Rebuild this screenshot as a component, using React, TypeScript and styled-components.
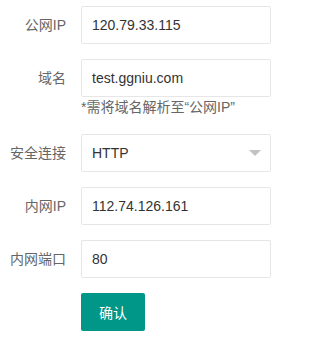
import React from "react";
import styled, { createGlobalStyle } from "styled-components";

const Global = createGlobalStyle`
  html, body { margin: 0; padding: 0; background: #fff; }
  body {
    font-family: "Liberation Sans", Arial, "Noto Sans CJK SC", sans-serif;
    font-size: 14px;
    color: #333;
  }
`;

const Form = styled.form`
  width: 290px;
  padding-top: 6px;
  box-sizing: border-box;
`;

const Item = styled.div`
  display: flex;
  align-items: flex-start;
  margin-bottom: 15px;
`;

const Label = styled.label`
  width: 81px;
  box-sizing: border-box;
  padding: 9px 15px 9px 0;
  line-height: 20px;
  text-align: right;
  color: #666;
  font-size: 14px;
  flex-shrink: 0;
`;

const Block = styled.div`
  width: 190px;
  display: flex;
  flex-direction: column;
`;

const Field = styled.div`
  position: relative;
  height: 38px;
  box-sizing: border-box;
  border: 1px solid #e6e6e6;
  border-radius: 2px;
  background: #fff;
  padding-left: 10px;
  display: flex;
  align-items: center;
  color: #333;
  font-size: 14px;
`;

const Arrow = styled.span`
  position: absolute;
  right: 9px;
  top: 50%;
  margin-top: -3px;
  width: 0;
  height: 0;
  border-left: 6px solid transparent;
  border-right: 6px solid transparent;
  border-top: 6px solid #c2c2c2;
`;

const Hint = styled.div`
  height: 22px;
  line-height: 20px;
  color: #666;
  font-size: 14px;
  white-space: nowrap;
`;

const Button = styled.button`
  height: 38px;
  padding: 0 18px;
  border: none;
  border-radius: 2px;
  background: #009688;
  color: #fff;
  font-family: inherit;
  font-size: 14px;
  cursor: pointer;
`;

type Row = { label: string; value: string; select?: boolean; hint?: string };

const rows: Row[] = [
  { label: "公网IP", value: "120.79.33.115" },
  { label: "域名", value: "test.ggniu.com", hint: "*需将域名解析至“公网IP”" },
  { label: "安全连接", value: "HTTP", select: true },
  { label: "内网IP", value: "112.74.126.161" },
  { label: "内网端口", value: "80" },
];

export default function App() {
  return (
    <>
      <Global />
      <Form onSubmit={(e) => e.preventDefault()}>
        {rows.map((r) => (
          <Item key={r.label}>
            <Label>{r.label}</Label>
            <Block>
              <Field>
                {r.value}
                {r.select && <Arrow />}
              </Field>
              {r.hint && <Hint>{r.hint}</Hint>}
            </Block>
          </Item>
        ))}
        <Item>
          <Label />
          <Block>
            <div>
              <Button type="submit">确认</Button>
            </div>
          </Block>
        </Item>
      </Form>
    </>
  );
}
